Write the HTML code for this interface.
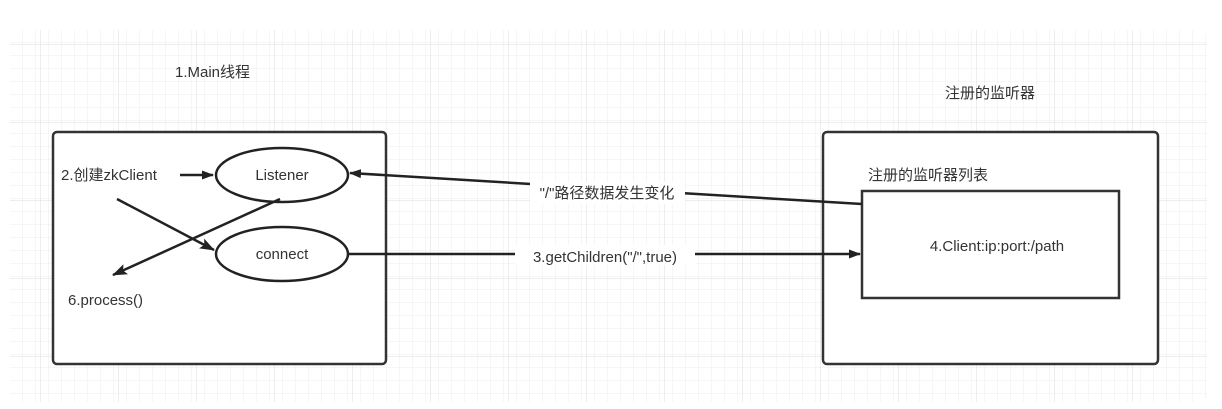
<!DOCTYPE html>
<html><head><meta charset="utf-8"><style>
html,body{margin:0;padding:0;background:#fff;width:1222px;height:409px;overflow:hidden}
svg text{font-family:"Liberation Sans","Noto Sans CJK SC",sans-serif;fill:#333;font-size:15px}
</style></head><body>
<svg width="1222" height="409" viewBox="0 0 1222 409">
<defs>
<pattern id="g" x="10" y="30" width="13" height="13" patternUnits="userSpaceOnUse">
<path d="M13 0V13M0 13H13" stroke="#ececec" stroke-width="1" fill="none"/></pattern>
<pattern id="G" x="40" y="44" width="78" height="78" patternUnits="userSpaceOnUse">
<path d="M0 0V78M0 0H78" stroke="#dedede" stroke-width="1" fill="none"/></pattern>
<marker id="a" markerWidth="12" markerHeight="9" refX="11" refY="4.5" orient="auto" markerUnits="userSpaceOnUse">
<path d="M0 0L12 4.5L0 9Z" fill="#222"/></marker>
<marker id="b" markerWidth="15" markerHeight="11" refX="14" refY="5.5" orient="auto" markerUnits="userSpaceOnUse">
<path d="M0 0L15 5.5L0 11L3 5.5Z" fill="#222"/></marker>
</defs>
<rect x="10" y="30" width="1197" height="372" rx="8" fill="url(#g)"/>
<rect x="10" y="30" width="1197" height="372" rx="8" fill="url(#G)"/>
<text x="175" y="77">1.Main线程</text>
<text x="945" y="98">注册的监听器</text>
<rect x="53" y="132" width="333" height="232" rx="4" fill="#fff" stroke="#333" stroke-width="2.5"/>
<rect x="823" y="132" width="335" height="232" rx="4" fill="#fff" stroke="#333" stroke-width="2.5"/>
<text x="868" y="180">注册的监听器列表</text>
<rect x="862" y="191" width="257" height="107" fill="#fff" stroke="#333" stroke-width="2.5"/>
<text x="997" y="251" text-anchor="middle">4.Client:ip:port:/path</text>
<text x="61" y="180">2.创建zkClient</text>
<line x1="180" y1="175" x2="213" y2="175" stroke="#222" stroke-width="2.5" marker-end="url(#a)"/>
<ellipse cx="282" cy="175" rx="66" ry="27" fill="#fff" stroke="#222" stroke-width="2.5"/>
<text x="282" y="180" text-anchor="middle">Listener</text>
<ellipse cx="282" cy="254" rx="66" ry="27" fill="#fff" stroke="#222" stroke-width="2.5"/>
<text x="282" y="259" text-anchor="middle">connect</text>
<line x1="117" y1="199" x2="214" y2="250" stroke="#222" stroke-width="2.5" marker-end="url(#b)"/>
<line x1="280" y1="199" x2="113" y2="275" stroke="#222" stroke-width="2.5" marker-end="url(#b)"/>
<text x="68" y="305">6.process()</text>
<line x1="862" y1="204" x2="350" y2="173" stroke="#222" stroke-width="2.5" marker-end="url(#a)"/>
<rect x="530" y="182" width="155" height="22" fill="#fff"/>
<text x="607" y="198" text-anchor="middle">"/"路径数据发生变化</text>
<line x1="349" y1="254" x2="860" y2="254" stroke="#222" stroke-width="2.5" marker-end="url(#a)"/>
<rect x="515" y="245" width="180" height="20" fill="#fff"/>
<text x="605" y="262" text-anchor="middle">3.getChildren("/",true)</text>
</svg>
</body></html>
